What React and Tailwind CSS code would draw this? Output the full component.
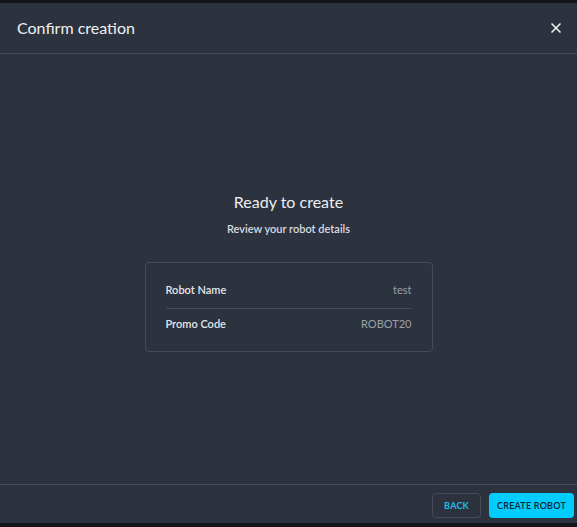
import React from 'react';
import { X } from 'lucide-react';

function App() {
  // Summary rows shown before the robot is created
  const details = [
    { label: 'Robot Name', value: 'test' },
    { label: 'Promo Code', value: 'ROBOT20' },
  ];

  return (
    <div
      className="h-[527px] w-[577px] bg-[#131519] pt-[3px] pb-[4px] flex flex-col overflow-hidden"
      style={{ fontFamily: 'Lato, "Noto Sans", sans-serif' }}
    >
      <div className="flex-1 bg-[#2c323e] flex flex-col">
        <div className="h-[51px] flex items-center justify-between pl-[17px] pr-[13px] border-b border-[#454b57]">
          <h2 className="text-[16px] text-[#eef0f3]">Confirm creation</h2>
          <button className="text-[#f1f2f4]">
            <X size={16} strokeWidth={2.5} />
          </button>
        </div>

        <div className="flex-1 flex flex-col items-center justify-center pt-[6px]">
          <h3 className="text-[16px] text-[#eceef1] leading-5">Ready to create</h3>
          <p className="mt-[9px] text-[11px] font-semibold text-[#d9dce1]">Review your robot details</p>

          <div className="mt-[25px] w-[288px] rounded border border-[#454b57] px-[20px] py-[20px]">
            {details.map((row, index) => (
              <div
                key={index}
                className="flex justify-between items-center leading-[14px] pb-[11px] border-b border-[#454b57] last:border-b-0 last:pb-0 last:pt-[8px] text-[11px]"
              >
                <span className="font-semibold text-[#e3e5e9]">{row.label}</span>
                <span className="text-[#9aa0aa]">{row.value}</span>
              </div>
            ))}
          </div>
        </div>

        <div className="h-[39px] border-t border-[#454b57] flex items-center justify-end gap-[8px] pr-[3px] pt-[3px]">
          <button className="h-[25px] px-[11px] rounded border border-[#464c58] text-[9px] font-bold tracking-wide text-[#1ebde6]">
            BACK
          </button>
          <button className="h-[25px] px-[8px] rounded bg-[#00cdfd] text-[9px] font-semibold tracking-wide text-[#0e2430]">
            CREATE ROBOT
          </button>
        </div>
      </div>
    </div>
  );
}

export default App;
